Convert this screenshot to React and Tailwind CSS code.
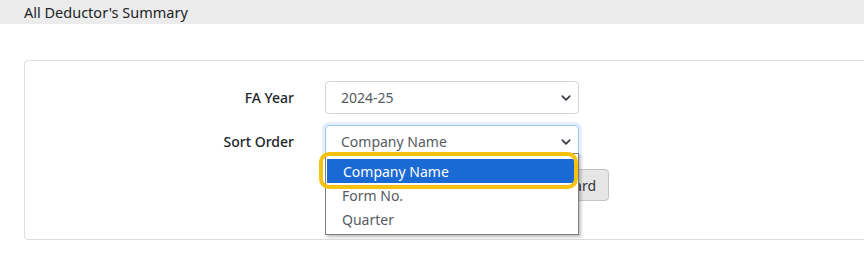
import { useState } from 'react'

const FONT = { fontFamily: '"Noto Sans", "Open Sans", sans-serif' }

function Chevron() {
  return (
    <svg width="10" height="10" viewBox="0 0 16 16" className="text-[#343a40]">
      <path
        d="M2 5l6 6 6-6"
        fill="none"
        stroke="currentColor"
        strokeWidth="2.6"
        strokeLinecap="round"
        strokeLinejoin="round"
      />
    </svg>
  )
}

function SelectBox({ value, focused }) {
  return (
    <div
      className={
        'flex h-[33px] w-[254px] items-center justify-between rounded-[4px] border bg-white pl-[15px] pr-[7px] text-[14px] text-[#555b61] ' +
        (focused
          ? 'border-[#9ec5f0] shadow-[0_0_0_3px_rgba(13,110,253,0.1)]'
          : 'border-[#ced4da]')
      }
    >
      <span>{value}</span>
      <Chevron />
    </div>
  )
}

export default function App() {
  const [options] = useState(['Company Name', 'Form No.', 'Quarter'])

  return (
    <div className="min-h-[271px] w-[864px] overflow-hidden bg-white text-[#212529]" style={FONT}>
      <div className="flex h-[24px] items-center bg-[#ececec] pl-[24px] text-[14.5px] leading-none">
        All Deductor's Summary
      </div>

      <div className="ml-[24px] mt-[36px] h-[180px] w-[860px] rounded-[4px] border border-[#dcdcdc] pt-[20px]">
        <div className="flex flex-col gap-[11px]">
          <div className="flex items-center">
            <label className="w-[300px] pr-[31px] text-right text-[14px] font-medium">FA Year</label>
            <SelectBox value="2024-25" />
          </div>
          <div className="relative flex items-center">
            <label className="w-[300px] pr-[31px] text-right text-[14px] font-medium">Sort Order</label>
            <SelectBox value="Company Name" focused />

            <div className="absolute left-[300px] top-[28px] z-10 w-[254px] border border-[#7d7d7d] bg-white pb-[3px] pt-[5px] text-[14px] shadow-[2px_2px_3px_rgba(0,0,0,0.25)]">
              {options.map((opt, i) => (
                <div
                  key={opt}
                  className={
                    'flex h-[24px] items-center pl-[16px] ' +
                    (i === 0 ? 'mx-[1px] bg-[#1a6ad6] text-white' : 'text-[#555b61]')
                  }
                >
                  {opt}
                </div>
              ))}
            </div>
            <div className="pointer-events-none absolute left-[294px] top-[27px] z-20 h-[37px] w-[259px] rounded-[10px] border-[4px] border-[#f5c20f]" />
          </div>
          <div className="flex pl-[516px]">
            <button className="flex h-[32px] w-[68px] items-center justify-end rounded-[4px] border border-[#c3c3c3] bg-[#e6e6e6] pr-[12px] text-[14px] text-[#333]">
              Dashboard
            </button>
          </div>
        </div>
      </div>
    </div>
  )
}
